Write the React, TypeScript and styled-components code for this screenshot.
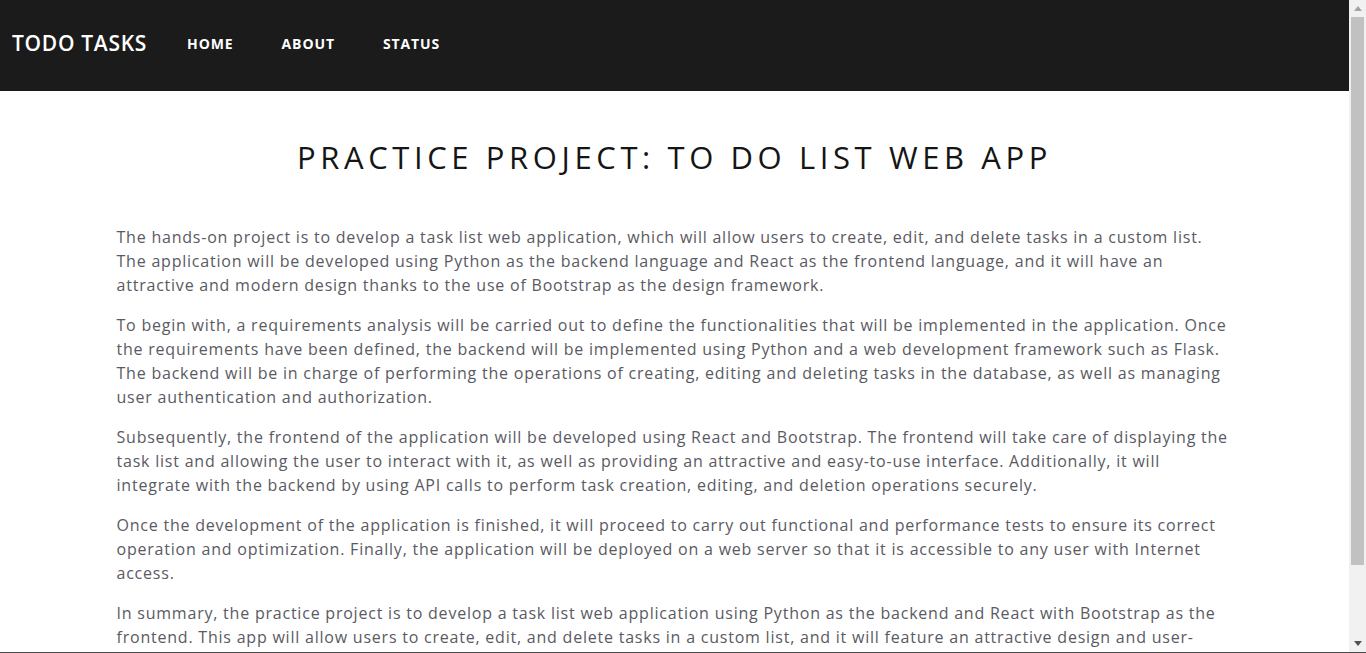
import React from "react";
import styled, { createGlobalStyle } from "styled-components";

const Global = createGlobalStyle`
  html, body { margin: 0; padding: 0; background: #fff; overflow: hidden; }
  body { font-family: "Open Sans", "Noto Sans", sans-serif; }
  * { box-sizing: border-box; }
`;

const Shell = styled.div`
  display: flex;
  height: 100vh;
  overflow: hidden;
  border-bottom: 1px solid #4a4a4a;
`;

const Page = styled.div`
  flex: 1;
  min-width: 0;
  overflow: hidden;
`;

const ScrollTrack = styled.div`
  width: 17px;
  flex: none;
  background: #f1f1f1;
  display: flex;
  flex-direction: column;
  align-items: center;
`;

const ArrowBtn = styled.div`
  height: 17px;
  width: 17px;
  display: flex;
  align-items: center;
  justify-content: center;
  flex: none;
`;

const Thumb = styled.div`
  width: 13px;
  height: 548px;
  background: #c1c1c1;
  flex: none;
`;

const TrackSpace = styled.div`
  flex: 1;
`;

const NavBar = styled.nav`
  height: 91px;
  background: #1b1b1b;
  display: flex;
  align-items: center;
  padding: 0 12px 5px;
`;

const Brand = styled.a`
  color: #fff;
  font-family: "Open Sans", sans-serif;
  font-size: 21px;
  font-weight: 600;
  letter-spacing: 0.7px;
  text-decoration: none;
  margin-right: 40px;
`;

const NavList = styled.ul`
  display: flex;
  list-style: none;
  margin: 0;
  padding: 0;
  gap: 48px;
`;

const NavLink = styled.a`
  display: block;
  color: #fff;
  font-family: "Open Sans", sans-serif;
  font-size: 14px;
  font-weight: 700;
  letter-spacing: 0.9px;
  text-decoration: none;
`;

const Container = styled.main`
  max-width: 1140px;
  margin: 0 auto;
  padding: 0 12px 60px;
`;

const Title = styled.h1`
  margin: 45px 0 47px;
  text-align: center;
  font-family: "Open Sans", sans-serif;
  font-weight: 400;
  font-size: 31px;
  letter-spacing: 4.6px;
  color: #151515;
`;

const Para = styled.p`
  margin: 0 0 16px;
  font-family: "Open Sans", sans-serif;
  font-size: 16px;
  line-height: 24px;
  letter-spacing: 0.78px;
  color: #5a5a63;
`;

const paragraphs = [
  "The hands-on project is to develop a task list web application, which will allow users to create, edit, and delete tasks in a custom list. The application will be developed using Python as the backend language and React as the frontend language, and it will have an attractive and modern design thanks to the use of Bootstrap as the design framework.",
  "To begin with, a requirements analysis will be carried out to define the functionalities that will be implemented in the application. Once the requirements have been defined, the backend will be implemented using Python and a web development framework such as Flask. The backend will be in charge of performing the operations of creating, editing and deleting tasks in the database, as well as managing user authentication and authorization.",
  "Subsequently, the frontend of the application will be developed using React and Bootstrap. The frontend will take care of displaying the task list and allowing the user to interact with it, as well as providing an attractive and easy-to-use interface. Additionally, it will integrate with the backend by using API calls to perform task creation, editing, and deletion operations securely.",
  "Once the development of the application is finished, it will proceed to carry out functional and performance tests to ensure its correct operation and optimization. Finally, the application will be deployed on a web server so that it is accessible to any user with Internet access.",
  "In summary, the practice project is to develop a task list web application using Python as the backend and React with Bootstrap as the frontend. This app will allow users to create, edit, and delete tasks in a custom list, and it will feature an attractive design and user-friendly interface.",
];

export default function App() {
  return (
    <>
      <Global />
      <Shell>
        <Page>
          <NavBar>
            <Brand href="#">TODO TASKS</Brand>
            <NavList>
              <li><NavLink href="#">HOME</NavLink></li>
              <li><NavLink href="#">ABOUT</NavLink></li>
              <li><NavLink href="#">STATUS</NavLink></li>
            </NavList>
          </NavBar>
          <Container>
            <Title>PRACTICE PROJECT: TO DO LIST WEB APP</Title>
            {paragraphs.map((p, i) => (
              <Para key={i}>{p}</Para>
            ))}
          </Container>
        </Page>
        <ScrollTrack>
          <ArrowBtn>
            <svg width="8" height="5" viewBox="0 0 8 5">
              <path d="M0 5 L4 0 L8 5 Z" fill="#a3a3a3" />
            </svg>
          </ArrowBtn>
          <Thumb />
          <TrackSpace />
          <ArrowBtn>
            <svg width="8" height="5" viewBox="0 0 8 5">
              <path d="M0 0 L8 0 L4 5 Z" fill="#505050" />
            </svg>
          </ArrowBtn>
        </ScrollTrack>
      </Shell>
    </>
  );
}
